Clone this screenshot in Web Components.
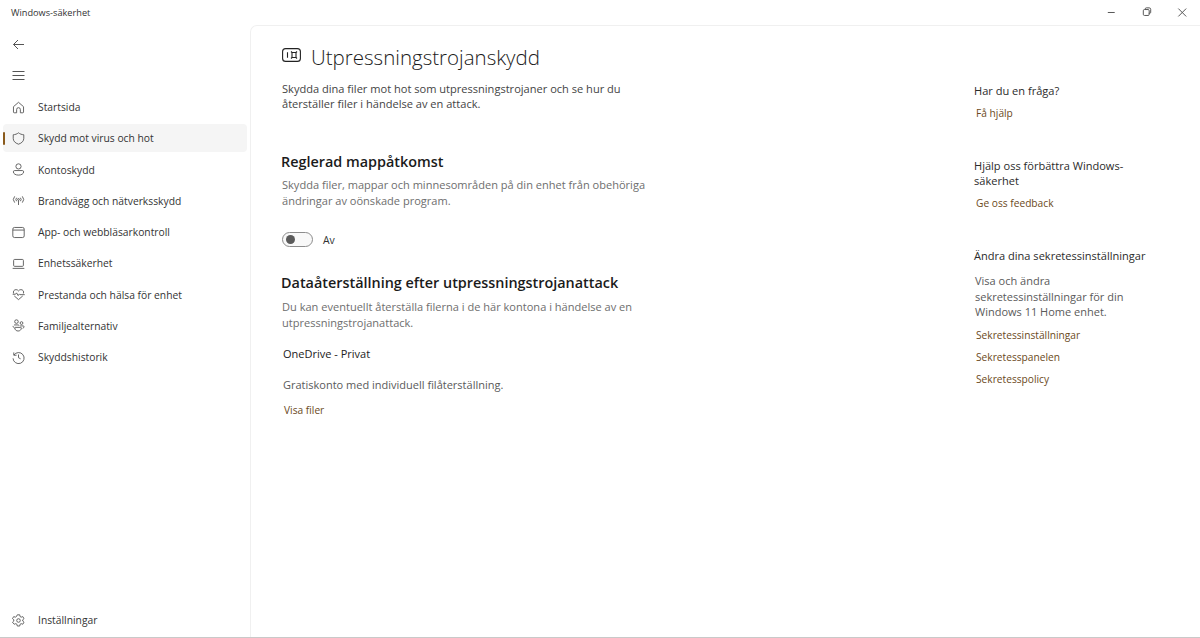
<!DOCTYPE html>
<html lang="sv">
<head>
<meta charset="UTF-8">
<title>Windows-säkerhet</title>
<style>
  html,body{margin:0;height:100%;background:#fff;overflow:hidden}
  body{font-family:"Open Sans","Noto Sans",sans-serif;color:#1b1b1b}
</style>
</head>
<body>
<sec-app>
  <win-bar slot="bar">Windows-säkerhet</win-bar>
  <side-nav slot="nav">
    <nav-item icon="home">Startsida</nav-item>
    <nav-item icon="shield" active>Skydd mot virus och hot</nav-item>
    <nav-item icon="user">Kontoskydd</nav-item>
    <nav-item icon="wifi">Brandvägg och nätverksskydd</nav-item>
    <nav-item icon="app">App- och webbläsarkontroll</nav-item>
    <nav-item icon="laptop">Enhetssäkerhet</nav-item>
    <nav-item icon="heart">Prestanda och hälsa för enhet</nav-item>
    <nav-item icon="family">Familjealternativ</nav-item>
    <nav-item icon="history">Skyddshistorik</nav-item>
    <nav-item slot="bottom" icon="gear">Inställningar</nav-item>
  </side-nav>
  <page-head slot="main" title="Utpressningstrojanskydd">Skydda dina filer mot hot som utpressningstrojaner och se hur du<br>återställer filer i händelse av en attack.</page-head>
  <sec-block slot="main" heading="Reglerad mappåtkomst" style="margin-top:40px;--gap:5px">
    Skydda filer, mappar och minnesområden på din enhet från obehöriga<br>ändringar av oönskade program.
  </sec-block>
  <toggle-switch slot="main" style="margin-top:23px">Av</toggle-switch>
  <sec-block slot="main" heading="Dataåterställning efter utpressningstrojanattack" style="margin-top:25.500px;--gap:6px">
    Du kan eventuellt återställa filerna i de här kontona i händelse av en<br>utpressningstrojanattack.
  </sec-block>
  <account-row slot="main" name="OneDrive - Privat" info="Gratiskonto med individuell filåterställning." link="Visa filer"></account-row>
  <side-group slot="aside" heading="Har du en fråga?">
    <side-link>Få hjälp</side-link>
  </side-group>
  <side-group slot="aside" heading="Hjälp oss förbättra Windows-säkerhet" style="margin-top:37px">
    <side-link>Ge oss feedback</side-link>
  </side-group>
  <side-group slot="aside" heading="Ändra dina sekretessinställningar" style="margin-top:37px">
    <span slot="text">Visa och ändra<br>sekretessinställningar för din<br>Windows 11 Home enhet.</span>
    <side-link>Sekretessinställningar</side-link>
    <side-link>Sekretesspanelen</side-link>
    <side-link>Sekretesspolicy</side-link>
  </side-group>
</sec-app>

<script>
const ICONS = {
  home:'<path d="M1.800 7 8 1.600 14.200 7v6.500a1 1 0 0 1-1 1H10.300V10.500a2.300 2.300 0 0 0-4.600 0v4H2.800a1 1 0 0 1-1-1z"/>',
  shield:'<path d="M8 1c1.900 1.500 3.900 2.200 6.500 2.400v4.400c0 3.400-2.200 5.700-6.500 7.200C3.700 13.500 1.500 11.200 1.500 7.800V3.400C4.100 3.200 6.100 2.500 8 1z"/>',
  user:'<circle cx="8" cy="4.200" r="3.200"/><path d="M3.300 9.300h9.400a1.600 1.600 0 0 1 1.600 1.600c0 2.500-2.800 4-6.300 4s-6.300-1.500-6.300-4a1.600 1.600 0 0 1 1.600-1.600z"/>',
  wifi:'<circle cx="8" cy="6.700" r="1.100"/><path d="M8 7.800v5.700M5.700 4.600a3.200 3.200 0 0 0 0 4.300M10.300 4.600a3.200 3.200 0 0 1 0 4.300M3.300 2.900a5.800 5.800 0 0 0 0 7.700M12.700 2.900a5.800 5.800 0 0 1 0 7.700"/>',
  app:'<rect x="1" y="1.800" width="14" height="12.400" rx="2"/><path d="M1 5h14"/>',
  laptop:'<rect x="2" y="3" width="12" height="8.500" rx="1.200"/><path d="M.8 14h14.400"/>',
  heart:'<path d="M2 6.800C.9 4 2.800 2 5 2c1.300 0 2.300.6 3 1.600C8.700 2.600 9.700 2 11 2c2.200 0 4.100 2 3 4.800"/><path d="M.8 7.700h3.500l1.300-1.700 2 3.300 1.500-2 .8.900h5.800M2.800 9.800 8 14.300l5.200-4.500"/>',
  family:'<circle cx="5.500" cy="3.200" r="2.200"/><circle cx="11.700" cy="5" r="1.700"/><path d="M2.500 7.300h5.200a1 1 0 0 1 1 1M10 8.500h3.800a1 1 0 0 1 1 1c0 1-.6 1.700-1.700 2M1.300 8.500c0 1.300.8 2.200 2 2.700"/><path d="M4.300 10.300h6.400a.8.800 0 0 1 .8.800c0 2.200-1.800 3.700-4 3.700s-4-1.500-4-3.700a.8.800 0 0 1 .8-.8z"/>',
  history:'<path d="M2.200 1.800v3.400h3.400"/><path d="M2.400 5A6.800 6.800 0 1 1 1.300 9"/><path d="M8 4.300v4l2.600 1.300"/>',
  gear:'<circle cx="8" cy="8" r="2.200"/><path d="M6.500 1h3l.4 2.100 1.400.8 2-.7 1.500 2.500-1.600 1.400v1.600l1.600 1.400-1.500 2.500-2-.7-1.400.8-.4 2.100h-3l-.4-2.100-1.400-.8-2 .7L.6 10.100l1.600-1.400V7.100L.6 5.700l1.500-2.500 2 .7 1.400-.8z"/>'
};

function define(name, html){
  customElements.define(name, class extends HTMLElement{
    constructor(){
      super();
      const shadow = this.attachShadow({mode:'open'});
      shadow.innerHTML = typeof html === 'function' ? html(this) : html;
    }
  });
}

define('sec-app', `
  <style>
    :host{display:grid;grid-template-columns:250px 1fr;grid-template-rows:25px 1fr;height:638px;box-sizing:border-box;border-bottom:1px solid #c9c9c9}
    .bar{grid-column:1/3}
    .panel{display:flex;border-left:1px solid #f0f0f0;border-top:1px solid #f0f0f0;border-top-left-radius:7px;min-height:0}
    .main{width:723px;padding:19px 0 0 30px;box-sizing:border-box;display:flex;flex-direction:column}
    .aside{padding:57px 0 0 0;width:190px;display:flex;flex-direction:column}
  </style>
  <div class="bar"><slot name="bar"></slot></div>
  <slot name="nav"></slot>
  <div class="panel">
    <div class="main"><slot name="main"></slot></div>
    <div class="aside"><slot name="aside"></slot></div>
  </div>`);

define('win-bar', `
  <style>
    :host{display:flex;align-items:center;height:25px;font-size:9.200px;color:#333;padding-left:11px}
    .ctl{margin-left:auto;display:flex}
    svg{width:35.500px;height:25px;fill:none;stroke:#555;stroke-width:1}
  </style>
  <slot></slot>
  <div class="ctl">
    <svg viewBox="0 0 36 25"><path d="M14 12.500h7"/></svg>
    <svg viewBox="0 0 36 25"><rect x="14.500" y="9.500" width="6" height="6" rx="1.200"/><path d="M16.500 9.500V8.800a1 1 0 0 1 1-1h3a1.500 1.500 0 0 1 1.500 1.500v3a1 1 0 0 1-1 1h-1"/></svg>
    <svg viewBox="0 0 36 25"><path d="M13.500 8.500l8 8M21.500 8.500l-8 8"/></svg>
  </div>`);

define('side-nav', `
  <style>
    :host{display:flex;flex-direction:column;height:612px;box-sizing:border-box;padding:4px 3px 0 3px}
    .tool{height:31.250px;display:flex;align-items:center;padding-left:9px}
    svg{width:13px;height:13px;fill:none;stroke:#555;stroke-width:1}
    .list{display:flex;flex-direction:column}
    .bottom{margin-top:auto;margin-bottom:1px}
  </style>
  <div class="tool"><svg viewBox="0 0 13 13"><path d="M12 6.500H1.500M6 2 1.500 6.500 6 11"/></svg></div>
  <div class="tool"><svg viewBox="0 0 13 13"><path d="M.5 2.500h12M.5 6.500h12M.5 10.500h12"/></svg></div>
  <div class="list"><slot></slot></div>
  <div class="bottom"><slot name="bottom"></slot></div>`);

define('nav-item', el => `
  <style>
    :host{display:flex;align-items:center;position:relative;height:31.250px;font-size:10.300px;color:#333;padding-left:9px}
    :host([active])::before{content:"";position:absolute;left:0;right:0;top:1.500px;height:28px;background:#f5f5f5;border-radius:4px}
    :host([active])::after{content:"";position:absolute;left:0;top:9px;width:2px;height:13px;background:#8a5a1c;border-radius:1px}
    svg{width:13px;height:13px;fill:none;stroke:#555;stroke-width:1.100;margin-right:13px;position:relative;flex:none}
    span{position:relative}
  </style>
  <svg viewBox="0 0 16 16">${ICONS[el.getAttribute('icon')]}</svg><span><slot></slot></span>`);

define('page-head', el => `
  <style>
    :host{display:block}
    .t{display:flex;align-items:center;height:24px;font-size:20.500px;font-weight:300;color:#1b1b1b}
    svg{width:19px;height:14px;fill:none;stroke:#222;stroke-width:1.100;margin:0 10px 4px 1px}
    p{margin:11.500px 0 0 1px;font-size:11.070px;line-height:15.500px;color:#444}
  </style>
  <div class="t"><svg viewBox="0 0 19 14"><rect x=".6" y=".6" width="17.800" height="12.800" rx="3"/><path d="M5.500 4.300v5.400M10 4.500h4v5h-4zM10 4.500l-1 -1M14 4.500l1 -1M10 9.500l-1 1M14 9.500l1 1"/></svg>${el.getAttribute('title')}</div>
  <p><slot></slot></p>`);

define('sec-block', el => `
  <style>
    :host{display:block}
    h2{margin:0;font-size:14.400px;line-height:20px;font-weight:600;color:#1b1b1b}
    p{margin:var(--gap,5px) 0 0 1px;font-size:11.050px;line-height:16px;color:#6e6e6e}
  </style>
  <h2>${el.getAttribute('heading')}</h2>
  <p><slot></slot></p>`);

define('toggle-switch', `
  <style>
    :host{display:flex;align-items:center;height:16px;font-size:10.400px;color:#333;padding-left:1px}
    .t{width:31px;height:15px;border:1px solid #8c8c8c;border-radius:8px;box-sizing:border-box;background:#f8f8f8;display:flex;align-items:center;padding-left:3px;margin-right:10px}
    .t i{width:9px;height:9px;border-radius:50%;background:#5a5a5a}
  </style>
  <div class="t"><i></i></div><slot></slot>`);

define('account-row', el => `
  <style>
    :host{display:block;padding-left:2px;font-size:11px}
    .n{margin-top:15px;line-height:16px;color:#222}
    .i{margin-top:15px;line-height:16px;color:#5a5a5a}
    side-link{margin:9px 0 0 1px}
  </style>
  <div class="n">${el.getAttribute('name')}</div>
  <div class="i">${el.getAttribute('info')}</div>
  <side-link>${el.getAttribute('link')}</side-link>`);

define('side-group', el => `
  <style>
    :host{display:block}
    h3{margin:0 0 1px;font-size:11.050px;line-height:15px;font-weight:400;color:#2b2b2b}
    .x{display:flow-root;font-size:11px;line-height:15.500px;color:#5a5a5a;padding-left:1px}
    ::slotted([slot=text]){display:block;margin:9px 0 1px}
    .l{padding-left:2px}
  </style>
  <h3>${el.getAttribute('heading')}</h3>
  <div class="x"><slot name="text"></slot></div>
  <div class="l"><slot></slot></div>`);

define('side-link', `
  <style>
    :host{display:block;font-size:10.200px;line-height:16px;color:#6b4a22;margin-top:6px}
  </style>
  <slot></slot>`);
</script>
</body>
</html>
